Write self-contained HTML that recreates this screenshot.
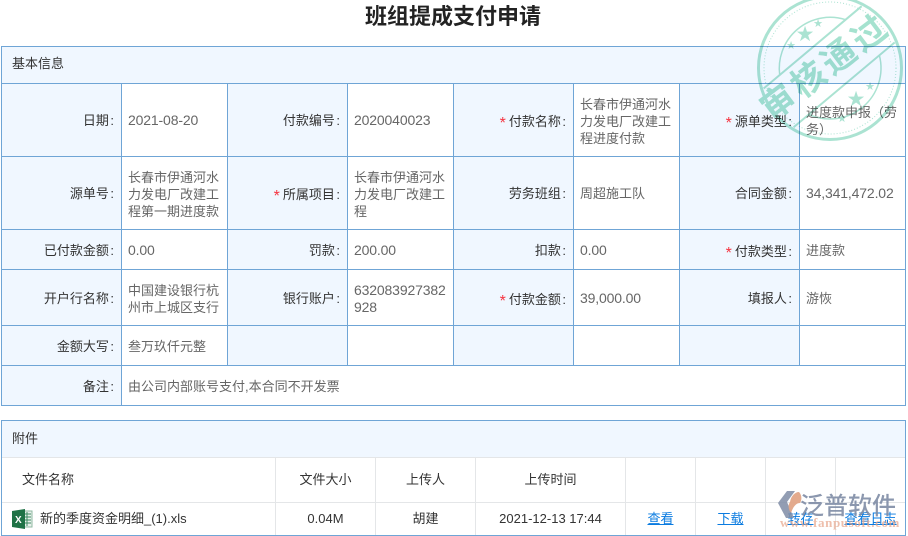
<!DOCTYPE html>
<html lang="zh">
<head>
<meta charset="utf-8">
<style>
html,body{margin:0;padding:0;background:#fff}
body{width:908px;height:536px;position:relative;overflow:hidden;font-family:"Liberation Sans","Noto Sans CJK SC",sans-serif;font-size:13px;color:#333}
.a{position:absolute}
.bg{position:absolute;background:#f0f7ff}
.h{position:absolute;height:1px;background:#6fa5d6}
.v{position:absolute;width:1px;background:#6fa5d6}
.gh{position:absolute;height:1px;background:#e4e6e8}
.gv{position:absolute;width:1px;background:#e4e6e8}
.l,.t,.c{position:absolute;line-height:17px;white-space:pre}
.l{text-align:right;color:#333}
.l b{color:#f5333f;font-weight:normal;font-size:16px;line-height:10px;margin-right:3px;position:relative;top:2px}
.l s{text-decoration:none;margin-left:1.5px}
.t{color:#666}
.n{font-size:14px;letter-spacing:-.15px}
.c{text-align:center;color:#333}
a{color:#0a7be0;text-decoration:underline}
</style>
</head>
<body>
<div class="a" style="left:0;top:3px;width:906px;text-align:center;font-size:22px;font-weight:bold;line-height:28px;color:#222">班组提成支付申请</div>

<div class="bg" style="left:1px;top:46px;width:904px;height:37px"></div>
<div class="bg" style="left:1px;top:84px;width:120px;height:321px"></div>
<div class="bg" style="left:228px;top:84px;width:119px;height:281px"></div>
<div class="bg" style="left:454px;top:84px;width:119px;height:281px"></div>
<div class="bg" style="left:680px;top:84px;width:119px;height:281px"></div>
<div class="bg" style="left:1px;top:420px;width:904px;height:37px"></div>

<div class="h" style="left:1px;top:46px;width:905px"></div>
<div class="h" style="left:1px;top:83px;width:905px"></div>
<div class="h" style="left:1px;top:156px;width:905px"></div>
<div class="h" style="left:1px;top:229px;width:905px"></div>
<div class="h" style="left:1px;top:269px;width:905px"></div>
<div class="h" style="left:1px;top:325px;width:905px"></div>
<div class="h" style="left:1px;top:365px;width:905px"></div>
<div class="h" style="left:1px;top:405px;width:905px"></div>
<div class="v" style="left:1px;top:46px;height:360px"></div>
<div class="v" style="left:905px;top:46px;height:360px"></div>
<div class="v" style="left:121px;top:83px;height:322px"></div>
<div class="v" style="left:227px;top:83px;height:282px"></div>
<div class="v" style="left:347px;top:83px;height:282px"></div>
<div class="v" style="left:453px;top:83px;height:282px"></div>
<div class="v" style="left:573px;top:83px;height:282px"></div>
<div class="v" style="left:679px;top:83px;height:282px"></div>
<div class="v" style="left:799px;top:83px;height:282px"></div>

<div class="l" style="left:12px;top:55px">基本信息</div>

<div class="l" style="left:1px;width:113px;top:112px">日期<s>:</s></div>
<div class="t n" style="left:128px;top:112px">2021-08-20</div>
<div class="l" style="left:228px;width:112px;top:112px">付款编号<s>:</s></div>
<div class="t n" style="left:354px;top:112px">2020040023</div>
<div class="l" style="left:454px;width:112px;top:113px"><b>*</b>付款名称<s>:</s></div>
<div class="t" style="left:580px;top:96px">长春市伊通河水
力发电厂改建工
程进度付款</div>
<div class="l" style="left:680px;width:112px;top:113px"><b>*</b>源单类型<s>:</s></div>
<div class="t" style="left:806px;top:104px">进度款申报（劳
务）</div>

<div class="l" style="left:1px;width:113px;top:185px">源单号<s>:</s></div>
<div class="t" style="left:128px;top:169px">长春市伊通河水
力发电厂改建工
程第一期进度款</div>
<div class="l" style="left:228px;width:112px;top:186px"><b>*</b>所属项目<s>:</s></div>
<div class="t" style="left:354px;top:169px">长春市伊通河水
力发电厂改建工
程</div>
<div class="l" style="left:454px;width:112px;top:185px">劳务班组<s>:</s></div>
<div class="t" style="left:580px;top:185px">周超施工队</div>
<div class="l" style="left:680px;width:112px;top:185px">合同金额<s>:</s></div>
<div class="t n" style="left:806px;top:185px">34,341,472.02</div>

<div class="l" style="left:1px;width:113px;top:242px">已付款金额<s>:</s></div>
<div class="t n" style="left:128px;top:242px">0.00</div>
<div class="l" style="left:228px;width:112px;top:242px">罚款<s>:</s></div>
<div class="t n" style="left:354px;top:242px">200.00</div>
<div class="l" style="left:454px;width:112px;top:242px">扣款<s>:</s></div>
<div class="t n" style="left:580px;top:242px">0.00</div>
<div class="l" style="left:680px;width:112px;top:243px"><b>*</b>付款类型<s>:</s></div>
<div class="t" style="left:806px;top:242px">进度款</div>

<div class="l" style="left:1px;width:113px;top:290px">开户行名称<s>:</s></div>
<div class="t" style="left:128px;top:282px">中国建设银行杭
州市上城区支行</div>
<div class="l" style="left:228px;width:112px;top:290px">银行账户<s>:</s></div>
<div class="t n" style="left:354px;top:282px">632083927382
928</div>
<div class="l" style="left:454px;width:112px;top:291px"><b>*</b>付款金额<s>:</s></div>
<div class="t n" style="left:580px;top:290px">39,000.00</div>
<div class="l" style="left:680px;width:112px;top:290px">填报人<s>:</s></div>
<div class="t" style="left:806px;top:290px">游恢</div>

<div class="l" style="left:1px;width:113px;top:338px">金额大写<s>:</s></div>
<div class="t" style="left:128px;top:338px">叁万玖仟元整</div>

<div class="l" style="left:1px;width:113px;top:378px">备注<s>:</s></div>
<div class="t" style="left:128px;top:378px">由公司内部账号支付,本合同不开发票</div>

<!-- attachments -->
<div class="gh" style="left:2px;top:457px;width:903px"></div>
<div class="gh" style="left:2px;top:502px;width:903px"></div>
<div class="gv" style="left:275px;top:457px;height:78px"></div>
<div class="gv" style="left:375px;top:457px;height:78px"></div>
<div class="gv" style="left:475px;top:457px;height:78px"></div>
<div class="gv" style="left:625px;top:457px;height:78px"></div>
<div class="gv" style="left:695px;top:457px;height:78px"></div>
<div class="gv" style="left:765px;top:457px;height:78px"></div>
<div class="gv" style="left:835px;top:457px;height:78px"></div>
<div class="h" style="left:1px;top:420px;width:905px"></div>
<div class="h" style="left:1px;top:535px;width:905px"></div>
<div class="v" style="left:1px;top:420px;height:116px"></div>
<div class="v" style="left:905px;top:420px;height:116px"></div>

<div class="l" style="left:12px;top:430px">附件</div>
<div class="l" style="left:22px;top:471px">文件名称</div>
<div class="c" style="left:276px;width:99px;top:471px">文件大小</div>
<div class="c" style="left:376px;width:99px;top:471px">上传人</div>
<div class="c" style="left:476px;width:149px;top:471px">上传时间</div>

<svg class="a" style="left:12px;top:509px" width="21" height="20" viewBox="0 0 21 20">
<rect x="7" y="2" width="13" height="16" fill="#e9f1ec" stroke="#8fb8a2" stroke-width="1"/>
<path d="M12 5h7M12 8h7M12 11h7M12 14h7M15 3v14" stroke="#3d8a62" stroke-width="1" fill="none"/>
<path d="M0 2 13 0V20L0 18Z" fill="#1f7246"/>
<text x="3" y="14" font-family="Liberation Sans" font-size="10" font-weight="bold" fill="#fff">X</text>
</svg>
<div class="l" style="left:40px;top:510px">新的季度资金明细_(1).xls</div>
<div class="c" style="left:276px;width:99px;top:510px">0.04M</div>
<div class="c" style="left:376px;width:99px;top:510px">胡建</div>
<div class="c" style="left:476px;width:149px;top:510px">2021-12-13 17:44</div>
<div class="c" style="left:626px;width:69px;top:510px"><a>查看</a></div>
<div class="c" style="left:696px;width:69px;top:510px"><a>下载</a></div>
<div class="c" style="left:766px;width:69px;top:510px"><a>转存</a></div>
<div class="c" style="left:836px;width:69px;top:510px"><a>查看日志</a></div>

<!-- stamp -->
<svg class="a" style="left:748px;top:0;mix-blend-mode:multiply" width="160" height="145" viewBox="0 0 160 145">
<g fill="none" stroke="#abe3d2">
<circle cx="82" cy="68" r="71.5" stroke-width="3"/>
<circle cx="82" cy="68" r="66" stroke-width="1" stroke-dasharray="1 2"/>
<g transform="rotate(-40 82 68)">
<path d="M39 41A51 51 0 0 1 125 41" stroke-width="1.5"/>
<path d="M36 90A51 51 0 0 0 128 90" stroke-width="1.5"/>
<path d="M18 41H146M16 90H148" stroke-width="2"/>
</g>
<text transform="rotate(-37 82 68)" x="79" y="76" text-anchor="middle" fill="#a5e2cf" stroke="none" font-family="Noto Sans CJK SC" font-size="34" font-weight="bold" letter-spacing="4">审核通过</text>
</g>
<g fill="#abe3d2" font-family="DejaVu Sans" text-anchor="middle">
<text x="57" y="41" font-size="21">★</text>
<text x="43" y="49" font-size="11">★</text>
<text x="70" y="27" font-size="11">★</text>
<text x="108" y="106" font-size="21">★</text>
<text x="122" y="90" font-size="11">★</text>
<text x="94" y="122" font-size="11">★</text>
</g>
</svg>

<!-- watermark logo -->
<svg class="a" style="left:775px;top:488px" width="30" height="34" viewBox="0 0 30 34">
<path d="M3 15 12 3H20L12 14 19 30 11 30Z" fill="#7f8ca6" opacity=".85"/>
<path d="M15 14C16 8 20 4 24 4 27 7 27 12 25 15 21 15 18 19 16 25 13 21 13 17 15 14Z" fill="#e2a587" opacity=".95"/>
</svg>
<div class="a" style="left:800px;top:488px;font-family:'Noto Sans CJK SC',sans-serif;font-weight:500;font-size:24px;line-height:32px;color:#7f8ca6;opacity:.9;white-space:pre">泛普软件</div>
<div class="a" style="left:780px;top:515px;font-family:'Liberation Serif',serif;font-size:13px;font-weight:bold;line-height:16px;color:#e8a58a;opacity:.7;letter-spacing:.6px;white-space:pre">www.fanpusoft.com</div>
</body>
</html>
